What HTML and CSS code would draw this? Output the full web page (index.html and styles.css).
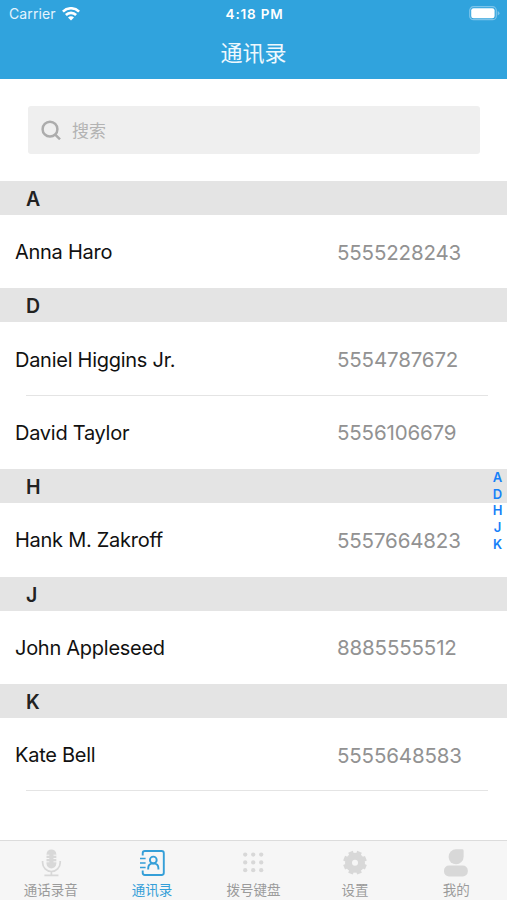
FILE: index.html
```html
<!DOCTYPE html>
<html lang="zh-CN">
<head>
<meta charset="utf-8">
<title>通讯录</title>
<link rel="stylesheet" href="styles.css">
</head>
<body>
<div class="app">
  <header class="top">
    <div class="status">
      <div class="carrier"><span>Carrier</span>
        <svg width="18" height="14" viewBox="0 0 18 14" fill="none" stroke="#fff" stroke-width="2.6"><path d="M.9 4.600a11.500 11.500 0 0 1 16.200 0"/><path d="M3.900 8a7.200 7.200 0 0 1 10.200 0"/><path d="M9 13.600 6 10.600a4.200 4.200 0 0 1 6 0z" fill="#fff" stroke="none"/></svg>
      </div>
      <div class="time">4:18 PM</div>
      <svg class="battery" width="31" height="15" viewBox="0 0 31 15"><rect x=".7" y=".7" width="26.600" height="13" rx="3.800" fill="none" stroke="#7cc4ea" stroke-width="1.200"/><rect x="2.200" y="2.200" width="23.400" height="10" rx="2.300" fill="#fff"/><path d="M28.700 5v4.400q1.800-.7 1.800-2.200T28.700 5z" fill="#7cc4ea"/></svg>
    </div>
    <h1>通讯录</h1>
  </header>
  <main>
    <div class="search">
      <svg width="20" height="20" viewBox="0 0 20 20" fill="none" stroke="#acacac" stroke-width="2.500"><circle cx="9" cy="9.200" r="7.400"/><path d="m14 14.300 5 5"/></svg>
      <span>搜索</span>
    </div>
    <section><h2>A</h2><div class="row"><span class="name">Anna Haro</span><span class="phone">5555228243</span></div></section>
    <section><h2>D</h2><div class="row line"><span class="name">Daniel Higgins Jr.</span><span class="phone">5554787672</span></div><div class="row"><span class="name">David Taylor</span><span class="phone">5556106679</span></div></section>
    <section><h2>H</h2><div class="row"><span class="name">Hank M. Zakroff</span><span class="phone">5557664823</span></div></section>
    <section><h2>J</h2><div class="row"><span class="name">John Appleseed</span><span class="phone">8885555512</span></div></section>
    <section><h2>K</h2><div class="row line"><span class="name">Kate Bell</span><span class="phone">5555648583</span></div></section>
  </main>
  <nav class="index"><span>A</span><span>D</span><span>H</span><span>J</span><span>K</span></nav>
  <footer class="tabs">
    <div class="tab">
      <svg width="28" height="28" viewBox="0 0 28 28"><rect x="9.500" y=".4" width="9.800" height="19" rx="4.900" fill="#d8d8d8"/><path d="M9 6.200h3.300M16.500 6.200h3.300M9 9.500h3.300M16.500 9.500h3.300M9 12.800h3.300M16.500 12.800h3.300" stroke="#f6f6f6" stroke-width="1"/><path d="M5.600 12v1.700a8.800 8.800 0 0 0 17.600 0V12M14.400 22.500v4M7.400 26.400h14" fill="none" stroke="#d8d8d8" stroke-width="1.700"/></svg>
      <span>通话录音</span>
    </div>
    <div class="tab active">
      <svg width="28" height="28" viewBox="0 0 28 28" fill="none" stroke="#359fd8" stroke-width="1.900"><path d="M4.700 6.500V4.200a2.200 2.200 0 0 1 2.200-2.200h16.700a2.200 2.200 0 0 1 2.200 2.200v19.600a2.200 2.200 0 0 1-2.200 2.200H6.900a2.200 2.200 0 0 1-2.200-2.200v-2.300"/><path d="M2 9.600h5.600M2 14h5.600M2 18.400h5.600" stroke-width="1.500"/><circle cx="15.300" cy="11" r="3.400"/><path d="M10.200 20.500v-1.300q0-4.500 5.100-4.800 5.100.3 5.100 4.800v1.300"/></svg>
      <span>通讯录</span>
    </div>
    <div class="tab">
      <svg width="28" height="28" viewBox="0 0 28 28" fill="#d8d8d8"><circle cx="6.200" cy="5.600" r="2.150"/><circle cx="14.200" cy="5.600" r="2.150"/><circle cx="22.200" cy="5.600" r="2.150"/><circle cx="6.200" cy="13.400" r="2.150"/><circle cx="14.200" cy="13.400" r="2.150"/><circle cx="22.200" cy="13.400" r="2.150"/><circle cx="6.200" cy="21.200" r="2.150"/><circle cx="14.200" cy="21.200" r="2.150"/><circle cx="22.200" cy="21.200" r="2.150"/></svg>
      <span>拨号键盘</span>
    </div>
    <div class="tab">
      <svg width="28" height="28" viewBox="-14 -13.700 28 28"><g fill="none" stroke="#d8d8d8"><circle r="6.500" stroke-width="7"/><path d="M0-11.800V-8M0 8v3.800M-11.800 0H-8M8 0h3.800M-8.340-8.340l2.700 2.700M5.640 5.640l2.700 2.700M8.340-8.340l-2.700 2.700M-5.640 5.640l-2.700 2.700" transform="rotate(22.500)" stroke-width="5"/></g></svg>
      <span>设置</span>
    </div>
    <div class="tab">
      <svg width="28" height="28" viewBox="0 0 28 28" fill="#d8d8d8"><path d="M14 .3h6.200a1.400 1.400 0 0 1 1.400 1.400V7.800A7.500 7.500 0 1 1 14 .3Z"/><rect x="2" y="16.500" width="23.800" height="11" rx="5"/></svg>
      <span>我的</span>
    </div>
  </footer>
</div>
</body>
</html>
```
FILE: styles.css
```css
* { box-sizing: border-box; }
body { margin: 0; background: #fff; font-family: Inter, "Noto Sans CJK SC", sans-serif; }
.app { position: relative; display: flex; flex-direction: column; width: 507px; height: 900px; overflow: hidden; }
.top { height: 79px; background: #30a3dd; color: #fff; }
.status { display: grid; grid-template-columns: 1fr auto 1fr; align-items: center; height: 27px; padding: 0 7px 0 9px; }
.carrier { display: flex; align-items: center; gap: 6px; font-size: 14px; letter-spacing: 0.1px; color: #e4f4fd; }
.time { font-size: 13.5px; font-weight: 600; letter-spacing: 0.8px; }
.battery { justify-self: end; }
h1 { margin: 10px 0 0; text-align: center; font-size: 22px; line-height: 32px; font-weight: 400; color: #eef8fd; }
main { flex: 1; }
.search { display: flex; align-items: center; gap: 11px; height: 48px; margin: 27px 27px 27px 28px; padding-left: 13px; border-radius: 3px; background: #efefef; color: #b3b3b3; font-size: 17px; }
.search span { margin-top: -2px; }
h2 { height: 34px; margin: 0; padding-left: 26px; background: #e4e4e4; color: #222; font-size: 19.5px; line-height: 36px; font-weight: 600; }
.row { display: grid; grid-template-columns: 322px 1fr; align-items: center; height: 73.4px; padding: 1px 0 0 15px; font-size: 20px; position: relative; }
.name { color: #111; letter-spacing: -0.27px; }
.phone { color: #929292; font-size: 20.5px; letter-spacing: -0.15px; }
.line::after { content: ""; position: absolute; left: 26px; right: 19px; bottom: 0; height: 1px; background: #e4e4e4; }
.index { position: absolute; right: 3px; top: 469px; width: 13px; display: flex; flex-direction: column; text-align: center; font-size: 13px; line-height: 16.7px; font-weight: 600; color: #1580f8; }
.tabs { display: grid; grid-template-columns: repeat(5, 1fr); height: 60px; border-top: 1px solid #dcdcdc; background: #f6f6f6; }
.tab { display: flex; flex-direction: column; align-items: center; padding-top: 8px; color: #9b9b9b; font-size: 13.5px; line-height: 20px; white-space: nowrap; }
.tab span { margin-top: 3px; }
.active { color: #359fd8; }
```
